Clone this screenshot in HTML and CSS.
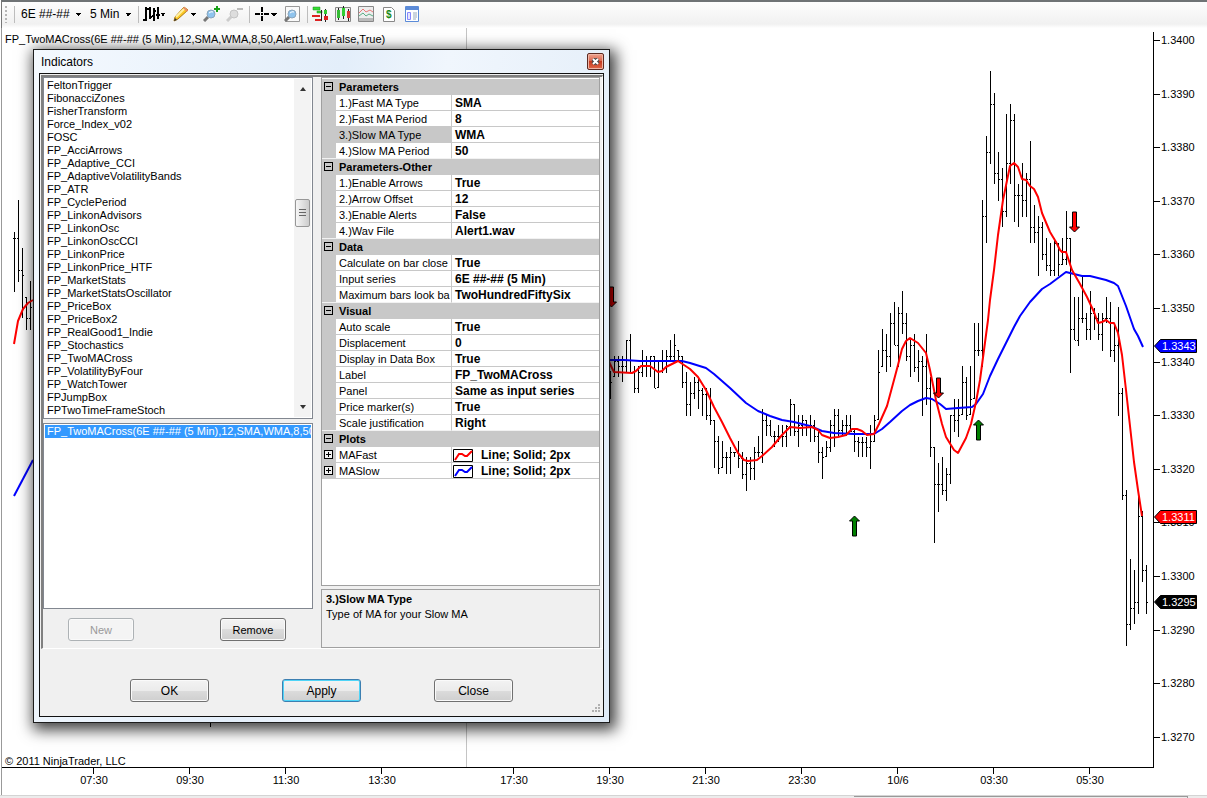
FILE: index.html
```html
<!DOCTYPE html>
<html lang="en">

<head>
    <meta charset="UTF-8" />
    <meta name="viewport" content="width=device-width, initial-scale=1" />
    <title>Chart - Indicators</title>
    <link rel="stylesheet" href="styles.css">
</head>

<body>

    <header class="toolbar">
        <span class="grip"></span>
        <span class="sep"></span>
        <select class="tool-select instrument" aria-label="Instrument">
            <option>6E ##-##</option>
        </select>
        <select class="tool-select interval" aria-label="Interval">
            <option>5 Min</option>
        </select>
        <span class="sep"></span>
        <button class="tool drop" aria-label="Chart style">
            <svg width="17" height="16" viewBox="0 0 17 16" fill="none" stroke="#000" stroke-width="2"><path d="M3 1v14M0 14h3M3 3h2M7 1v12M5 3h2M7 11h2M11 2v13M9 10h2M11 5h2M15 1v12M13 9h4" /></svg>
        </button>
        <button class="tool drop" aria-label="Drawing tools">
            <svg width="17" height="16" viewBox="0 0 17 16"><path d="M1 15l1-4L11 1l4 3L5 13z" fill="#fbc926" stroke="#b07a10" /><path d="M3 11l9-9" stroke="#fff0a0" stroke-width="2" /><path d="M10 2l1-1 4 3-1 2z" fill="#e98a6a" /><path d="M1 15l1-3 2 2z" fill="#333" /></svg>
        </button>
        <button class="tool" aria-label="Zoom in">
            <svg width="17" height="16" viewBox="0 0 17 16"><path d="M1 15l4-4" stroke="#777" stroke-width="3" /><circle cx="8" cy="8" r="4" fill="#8fc4ee" stroke="#8aa5bc" /><path d="M6 7q2-2 4-1" stroke="#fff" fill="none" /><path d="M14 0v6M11 3h6" stroke="#18a018" stroke-width="2" /></svg>
        </button>
        <button class="tool" aria-label="Zoom out">
            <svg width="17" height="16" viewBox="0 0 17 16"><path d="M1 15l4-4" stroke="#ccc" stroke-width="3" /><circle cx="8" cy="8" r="4" fill="#ddd" stroke="#c4c4c4" /><path d="M11 3h6" stroke="#bbb" stroke-width="2" /></svg>
        </button>
        <span class="sep"></span>
        <button class="tool drop" aria-label="Cross hair">
            <svg width="17" height="16" viewBox="0 0 17 16" stroke="#000" stroke-width="2"><path d="M1 8h5M10 8h5M8 1v5M8 10v5" /><path d="M7 8h2" /></svg>
        </button>
        <button class="tool" aria-label="Zoom frame">
            <svg width="17" height="16" viewBox="0 0 17 16"><path d="M1.500.5h14v15h-14z" fill="#fafafa" stroke="#999" /><path d="M1 15l5-5" stroke="#777" stroke-width="3" /><circle cx="8" cy="8" r="4" fill="#8fc4ee" stroke="#8aa5bc" /><path d="M6 7q2-2 4-1" stroke="#fff" fill="none" /></svg>
        </button>
        <span class="sep"></span>
        <button class="tool" aria-label="Chart trader">
            <svg width="17" height="16" viewBox="0 0 17 16"><path d="M1 1h7v3H1zM5 5h5v2H5z" fill="#3d3" stroke="#282" stroke-width=".5" /><path d="M0 9h8v2H0zM3 13h7v2H3z" fill="#d22" /><path d="M9.500 4v11M13.500 3v13" stroke="#222" /><path d="M12 4h3v4h-3z" fill="#3c3" /><path d="M12 10h4v4h-4z" fill="#d22" /></svg>
        </button>
        <button class="tool" aria-label="Data series">
            <svg width="17" height="16" viewBox="0 0 17 16"><path d="M.5 1.500h15v14H.5z" fill="#eee" stroke="#888" /><path d="M3.500 2v12M8.500 0v13M13.500 3v12" stroke="#222" /><path d="M2 4h3v8H2z" fill="#3b3" /><path d="M7 2h3v8H7z" fill="#3c3" /><path d="M12 5h3v7h-3z" fill="#d33" /></svg>
        </button>
        <button class="tool" aria-label="Indicators">
            <svg width="17" height="16" viewBox="0 0 17 16" fill="none"><path d="M.5.5h15v15H.5z" fill="#eee" stroke="#888" /><path d="M1 12h14v3H1z" fill="#bbb" /><path d="M1 7l4-4 3 3 4-2 3 2" stroke="#e87878" /><path d="M1 10l4-3 3 3 3-2 4 2" stroke="#5aae86" /></svg>
        </button>
        <button class="tool" aria-label="Strategies">
            <svg width="17" height="16" viewBox="0 0 17 16"><path d="M2.500 1.500h8l3 3v11h-11z" fill="#fff" stroke="#888" /><text class="dollar" x="5" y="12">$</text></svg>
        </button>
        <button class="tool" aria-label="Properties">
            <svg width="17" height="16" viewBox="0 0 17 16"><path d="M1.500.5h13v15h-13z" fill="#fff" stroke="#5b8bd8" /><path d="M2 1h12v3H2z" fill="#5b8bd8" /><path d="M3.500 6.500h3v7h-3z" fill="#e4e4ff" stroke="#88f" /><path d="M9 7h4M9 9h4M9 11h4M9 13h3" stroke="#9ab" /></svg>
        </button>
    </header>

    <main class="desktop">
        <svg class="chart" id="chart" viewBox="0 28 1207 767">
            <path class="edge" d="M1.500 28V795" />
            <path class="session" d="M466.500 28V767" />
            <g id="bars"></g>
            <path class="bar" d="M210.500 700V727" />
            <polyline class="slow" points="14,496 33,460" />
            <polyline class="slow" points="605,360 624,360 640,361 682,361 690,363 706,368 714,374 730,388 746,403 758,411 770,416 782,420 794,422 810,426 822,431 834,433 854,434 874,434 882,429 890,422 902,411 910,405 918,401 926,398 932,399 940,404 946,409 958,408 972,407 976,404 983,394 990,376 998,359 1006,343 1014,327 1020,316 1030,302 1042,289 1050,284 1066,272 1082,276 1090,276 1106,280 1114,283 1118,286 1126,306 1134,329 1138,336 1143,347" />
            <polyline class="fast" points="14,344 18,321 23,309 28,303 33,300" />
            <polyline class="fast" points="606,355 610,364 614,372 632,373 636,371 641,366 650,366 658,372 662,371 666,367 678,361 690,369 698,377 706,390 714,407 722,422 730,438 738,453 744,460 748,461 757,460 762,456 772,447 782,435 790,427 800,428 812,427 818,430 822,435 830,438 838,437 846,435 852,429 857,429 862,431 867,435 874,434 879,424 887,406 894,380 898,365 902,349 906,341 910,338 918,343 926,353 930,370 936,400 942,424 946,437 954,450 958,453 966,438 971,424 976,402 980,380 984,350 988,320 990,300 994,270 998,235 1003,200 1010,166 1014,163 1018,167 1022,179 1026,180 1030,186 1034,189 1038,197 1042,213 1050,232 1056,242 1060,250 1062,252 1066,252 1072,270 1080,284 1087,297 1094,312 1098,323 1102,322 1106,320 1110,323 1114,323 1118,333 1122,355 1126,390 1134,462 1138,490 1142,516" />
            <g id="arrows"></g>
            <path class="axis" d="M1153.500 32V767.500H2" />
            <g id="scale"></g>
            <text x="5" y="43">FP_TwoMACross(6E ##-## (5 Min),12,SMA,WMA,8,50,Alert1.wav,False,True)</text>
            <text x="5" y="765">© 2011 NinjaTrader, LLC</text>
        </svg>

        <section class="dialog" role="dialog" aria-labelledby="dialogTitle">
            <div class="titlebar">
                <h1 id="dialogTitle">Indicators</h1>
                <button class="close" aria-label="Close window">
                    <svg width="9" height="7" viewBox="0 0 9 7"><path d="M2 1l5 5M7 1L2 6" stroke="#444" stroke-width="4" /><path d="M2 1l5 5M7 1L2 6" stroke="#fff" stroke-width="2" /></svg>
                </button>
            </div>

            <div class="client">
                <div class="panes">
                    <div class="left">
                        <div class="listbox available">
                            <select size="26" aria-label="Available indicators">
                                <option>FeltonTrigger</option>
                                <option>FibonacciZones</option>
                                <option>FisherTransform</option>
                                <option>Force_Index_v02</option>
                                <option>FOSC</option>
                                <option>FP_AcciArrows</option>
                                <option>FP_Adaptive_CCI</option>
                                <option>FP_AdaptiveVolatilityBands</option>
                                <option>FP_ATR</option>
                                <option>FP_CyclePeriod</option>
                                <option>FP_LinkonAdvisors</option>
                                <option>FP_LinkonOsc</option>
                                <option>FP_LinkonOscCCI</option>
                                <option>FP_LinkonPrice</option>
                                <option>FP_LinkonPrice_HTF</option>
                                <option>FP_MarketStats</option>
                                <option>FP_MarketStatsOscillator</option>
                                <option>FP_PriceBox</option>
                                <option>FP_PriceBox2</option>
                                <option>FP_RealGood1_Indie</option>
                                <option>FP_Stochastics</option>
                                <option>FP_TwoMACross</option>
                                <option>FP_VolatilityByFour</option>
                                <option>FP_WatchTower</option>
                                <option>FPJumpBox</option>
                                <option>FPTwoTimeFrameStoch</option>
                            </select>
                            <div class="scrollbar">
                                <span class="arrow up"></span>
                                <span class="thumb"></span>
                                <span class="arrow down"></span>
                            </div>
                        </div>
                        <div class="listbox applied">
                            <select size="14" aria-label="Applied indicators">
                                <option selected>FP_TwoMACross(6E ##-## (5 Min),12,SMA,WMA,8,50,Alert1.wav,False,True)</option>
                            </select>
                        </div>
                        <div class="list-actions">
                            <button class="btn small" disabled>New</button>
                            <button class="btn small">Remove</button>
                        </div>
                    </div>

                    <div class="right">
                        <div class="grid-box">
                            <table class="props">
                                <colgroup>
                                    <col class="col-toggle">
                                    <col class="col-name">
                                    <col>
                                </colgroup>
                                <tbody>
                                    <tr class="cat"><td><button class="toggle" aria-label="Collapse Parameters"></button></td><th colspan="2">Parameters</th></tr>
                                    <tr><td></td><th>1.)Fast MA Type</th><td>SMA</td></tr>
                                    <tr><td></td><th>2.)Fast MA Period</th><td>8</td></tr>
                                    <tr class="current"><td></td><th>3.)Slow MA Type</th><td>WMA</td></tr>
                                    <tr><td></td><th>4.)Slow MA Period</th><td>50</td></tr>
                                </tbody>
                                <tbody>
                                    <tr class="cat"><td><button class="toggle" aria-label="Collapse Parameters-Other"></button></td><th colspan="2">Parameters-Other</th></tr>
                                    <tr><td></td><th>1.)Enable Arrows</th><td>True</td></tr>
                                    <tr><td></td><th>2.)Arrow Offset</th><td>12</td></tr>
                                    <tr><td></td><th>3.)Enable Alerts</th><td>False</td></tr>
                                    <tr><td></td><th>4.)Wav File</th><td>Alert1.wav</td></tr>
                                </tbody>
                                <tbody>
                                    <tr class="cat"><td><button class="toggle" aria-label="Collapse Data"></button></td><th colspan="2">Data</th></tr>
                                    <tr><td></td><th>Calculate on bar close</th><td>True</td></tr>
                                    <tr><td></td><th>Input series</th><td>6E ##-## (5 Min)</td></tr>
                                    <tr><td></td><th>Maximum bars look ba</th><td>TwoHundredFiftySix</td></tr>
                                </tbody>
                                <tbody>
                                    <tr class="cat"><td><button class="toggle" aria-label="Collapse Visual"></button></td><th colspan="2">Visual</th></tr>
                                    <tr><td></td><th>Auto scale</th><td>True</td></tr>
                                    <tr><td></td><th>Displacement</th><td>0</td></tr>
                                    <tr><td></td><th>Display in Data Box</th><td>True</td></tr>
                                    <tr><td></td><th>Label</th><td>FP_TwoMACross</td></tr>
                                    <tr><td></td><th>Panel</th><td>Same as input series</td></tr>
                                    <tr><td></td><th>Price marker(s)</th><td>True</td></tr>
                                    <tr><td></td><th>Scale justification</th><td>Right</td></tr>
                                </tbody>
                                <tbody>
                                    <tr class="cat"><td><button class="toggle" aria-label="Collapse Plots"></button></td><th colspan="2">Plots</th></tr>
                                    <tr><td><button class="toggle plus" aria-label="Expand MAFast"></button></td><th>MAFast</th>
                                        <td class="plot"><div><svg width="20" height="13" viewBox="0 0 20 13"><path d="M.5.5h19v12H.5z" fill="#fff" stroke="#000" /><path d="M2 11l4-6h3l3 2h2l5-5" fill="none" stroke="#f00" stroke-width="2" /></svg>Line; Solid; 2px</div></td></tr>
                                    <tr><td><button class="toggle plus" aria-label="Expand MASlow"></button></td><th>MASlow</th>
                                        <td class="plot"><div><svg width="20" height="13" viewBox="0 0 20 13"><path d="M.5.5h19v12H.5z" fill="#fff" stroke="#000" /><path d="M2 11l4-6h3l3 2h2l5-5" fill="none" stroke="#00f" stroke-width="2" /></svg>Line; Solid; 2px</div></td></tr>
                                </tbody>
                            </table>
                        </div>
                        <div class="help">
                            <h2>3.)Slow MA Type</h2>
                            <p>Type of MA for your Slow MA</p>
                        </div>
                    </div>
                </div>

                <div class="actions">
                    <button class="btn">OK</button>
                    <button class="btn default">Apply</button>
                    <button class="btn">Close</button>
                </div>
                <svg class="resize" width="9" height="9" viewBox="0 0 9 9" fill="#b0b0b0"><path d="M7 0h2v2H7zM7 3h2v2H7zM7 6h2v2H7zM4 3h2v2H4zM4 6h2v2H4zM1 6h2v2H1z" /></svg>
            </div>
        </section>
    </main>

    <footer class="status"><span></span></footer>

    <script src="chart.js"></script>
</body>

</html>
```

FILE: styles.css
```css
* {
    box-sizing: border-box;
}

body {
    margin: 0;
    min-height: 100vh;
    display: flex;
    flex-direction: column;
    background: #fff;
    color: #000;
    font-family: "Liberation Sans", Arial, sans-serif;
    font-size: 11px;
    overflow: hidden;
}

button,
select {
    font: inherit;
    color: inherit;
}

/* toolbar */

.toolbar {
    height: 28px;
    flex: none;
    display: flex;
    align-items: center;
    margin-left: 1px;
    padding: 0 0 2px 3px;
    border-top: 2px solid #6f7375;
    border-left: 1px solid #777;
    background: linear-gradient(#fdfdfd, #f1f1f1 85%, #fff);
    font-size: 12px;
}

.grip {
    width: 2px;
    height: 17px;
    margin-right: 7px;
    background: repeating-linear-gradient(#b5b5b5 0 2px, transparent 2px 4px);
}

.sep {
    width: 1px;
    height: 17px;
    margin-right: 4px;
    background: #bdbdbd;
}

.tool-select {
    appearance: none;
    height: 20px;
    margin-right: 6px;
    padding: 0 0 0 2px;
    border: 0;
}

.tool-select,
.tool.drop {
    background: conic-gradient(from -45deg at 50% 100%, #000 90deg, transparent 0) no-repeat right 1px center / 6px 3px;
}

.instrument {
    width: 63px;
}

.interval {
    width: 44px;
}

.tool {
    display: flex;
    width: 17px;
    margin-right: 6px;
    padding: 0;
    border: 0;
    background: none;
}

.tool.drop {
    width: 24px;
}

.dollar {
    font-size: 10px;
    font-weight: bold;
    fill: #188a18;
}

/* chart */

.desktop {
    position: relative;
}

.chart {
    display: block;
    width: 100%;
    height: auto;
    font-size: 11px;
}

.edge,
.session,
.bar,
.axis {
    fill: none;
    shape-rendering: crispEdges;
}

.edge {
    stroke: #999;
}

.session {
    stroke: #c4c4c4;
}

.bar,
.axis {
    stroke: #000;
}

.slow,
.fast {
    fill: none;
    stroke-width: 2;
    stroke-linejoin: round;
}

.slow {
    stroke: #00f;
}

.fast {
    stroke: #f00;
}

.time {
    text-anchor: middle;
}

.marker {
    stroke: #000;
}

.marker-text {
    fill: #fff;
}

.status {
    flex: 1;
    display: flex;
    justify-content: flex-end;
    padding-right: 19px;
    border-top: 1px solid #d4d4d4;
    background: #ececec;
}

.status span {
    width: 334px;
    border-top: 1px solid #999;
    border-right: 1px solid #999;
}

/* dialog */

.dialog {
    position: absolute;
    left: 33px;
    top: 21px;
    width: 577px;
    display: flex;
    flex-direction: column;
    padding: 0 5px 5px;
    border: 1px solid #1c1c1c;
    background: linear-gradient(100deg, #f4f9fe, #e3eefa 45%, #f0f6fd 60%, #dfebf7);
    box-shadow: 3px 4px 14px 3px rgba(0, 0, 0, .75);
}

.titlebar {
    height: 23px;
    display: flex;
    align-items: center;
    justify-content: space-between;
    padding-left: 2px;
}

.titlebar h1 {
    margin: 0;
    font-size: 12px;
    font-weight: normal;
}

.close {
    width: 17px;
    height: 17px;
    display: flex;
    align-items: center;
    justify-content: center;
    padding: 0;
    border: 1px solid #5c2a22;
    border-radius: 2px;
    background: linear-gradient(#eea48f, #d9614a 50%, #c5391f 50%, #e0694a);
    box-shadow: inset 0 0 0 1px #f0b5a5;
}

.client {
    position: relative;
    border: 1px solid #111;
    background: #f0f0f0;
}

.panes {
    display: flex;
    gap: 8px;
    margin: 1px 0 0 1px;
    padding-right: 2px;
    border: 2px solid #808080;
    border-right-width: 1px;
    border-bottom-width: 1px;
    border-color: #808080 #fff #fff #808080;
}

.left {
    width: 270px;
    display: flex;
    flex-direction: column;
    gap: 4px;
}

.listbox {
    display: flex;
    padding: 1px;
    border: 1px solid #828790;
    background: #fff;
}

.listbox select {
    flex: 1;
    min-width: 0;
    padding: 0;
    border: 0;
    outline: 0;
    border-radius: 0;
    background: #fff;
    overflow: hidden;
    scrollbar-width: none;
}

.listbox option {
    height: 13px;
    min-height: 13px;
    padding: 0 2px;
    line-height: 13px;
    overflow: hidden;
}

.listbox option:checked {
    background: #3399ff linear-gradient(#3399ff, #3399ff);
    color: #fff;
    -webkit-text-fill-color: #fff;
}

.available {
    height: 342px;
}

.available select {
    height: 338px;
}

.applied {
    height: 186px;
}

.scrollbar {
    width: 17px;
    display: flex;
    flex-direction: column;
    align-items: center;
    justify-content: space-between;
    padding: 8px 0;
    background: #f3f3f3;
}

.arrow {
    border: 3px solid transparent;
}

.up {
    border-top: 0;
    border-bottom: 4px solid #333;
}

.down {
    border-bottom: 0;
    border-top: 4px solid #333;
}

.thumb {
    width: 15px;
    height: 28px;
    margin-bottom: 70px;
    border: 1px solid #979797;
    border-radius: 2px;
    background:
        repeating-linear-gradient(#666 0 1px, transparent 1px 3px) no-repeat center / 7px 9px,
        linear-gradient(90deg, #f6f6f6, #ccc);
}

.list-actions {
    display: flex;
    justify-content: space-between;
    padding: 5px 27px 7px 25px;
}

.btn {
    width: 79px;
    height: 23px;
    padding: 0;
    border: 1px solid #707070;
    border-radius: 3px;
    background: linear-gradient(#f3f3f3, #ebebeb 50%, #dcdcdc 50%, #cfcfcf);
    box-shadow: inset 0 0 0 1px #fafafa;
    font-size: 12px;
}

.btn.small {
    width: 66px;
    font-size: 11px;
}

.btn:disabled {
    border-color: #adb2b5;
    background: #f4f4f4;
    color: #9a9a9a;
}

.btn.default {
    border-color: #3c7fb1;
    box-shadow: inset 0 0 0 1px #4fd4f7;
}

.right {
    flex: 1;
    min-width: 0;
    display: flex;
    flex-direction: column;
    gap: 3px;
}

.grid-box {
    height: 509px;
    padding-top: 1px;
    border: 1px solid #a0a0a0;
    background: #fff;
}

.props {
    width: 100%;
    table-layout: fixed;
    border-collapse: separate;
    border-spacing: 0;
}

.col-toggle {
    width: 14px;
}

.col-name {
    width: 116px;
}

.props td,
.props th {
    height: 16px;
    padding: 2px 0 0 3px;
    border-bottom: 1px solid #c8c8c8;
    line-height: 13px;
    text-align: left;
    white-space: nowrap;
    overflow: hidden;
}

.props th {
    font-weight: normal;
    border-right: 1px solid #c8c8c8;
}

.props td {
    font-size: 12px;
    font-weight: bold;
}

.props td:first-child {
    padding: 0 0 0 2px;
    background: #c8c8c8;
}

.props .cat th {
    font-weight: bold;
    border-right: 0;
    background: #c8c8c8;
}

.props .current th {
    background: #c8c8c8;
}

.props tbody:not(:last-child) tr:last-child > * {
    border-bottom-color: #f2f2f2;
}

.toggle {
    display: block;
    width: 9px;
    height: 9px;
    padding: 0;
    border: 1px solid #000;
    background: linear-gradient(#000, #000) no-repeat center / 5px 1px;
}

.toggle.plus {
    background:
        linear-gradient(#000, #000) no-repeat center / 5px 1px,
        linear-gradient(#000, #000) no-repeat center / 1px 5px,
        #f0f0f0;
}

.props .plot {
    padding: 1px 0 0 1px;
}

.plot div {
    display: flex;
    align-items: center;
    gap: 8px;
    height: 14px;
}

.help {
    flex: 1;
    padding: 2px 4px;
    border: 1px solid #a0a0a0;
}

.help h2,
.help p {
    margin: 0;
    font-size: 11px;
    line-height: 15px;
}

.actions {
    display: flex;
    justify-content: space-between;
    padding: 30px 90px 14px;
}

.resize {
    position: absolute;
    right: 3px;
    bottom: 3px;
}
```

FILE: chart.js
```js
const NS = "http://www.w3.org/2000/svg";

// each run: first x, then [high, low, close] for every bar
const runs = [
    { x: 14, bars: [[232, 292, 238], [200, 282, 270], [248, 318, 275], [297, 330, 318], [281, 330, 307]] },
    { x: 610, bars: [
        [371, 399, 382], [356, 377, 361], [356, 377, 366], [356, 382, 366], [340, 372, 340], [334, 373, 372],
        [366, 393, 388], [366, 393, 372], [350, 377, 361], [356, 377, 366], [356, 377, 356], [356, 388, 388],
        [362, 388, 371], [350, 373, 361], [350, 373, 356], [340, 362, 356], [334, 362, 345], [350, 360, 356],
        [356, 388, 382], [372, 416, 404], [382, 416, 393], [377, 399, 382], [377, 409, 390], [388, 416, 394],
        [388, 420, 415], [388, 425, 420], [420, 468, 441], [436, 474, 468], [441, 468, 457], [452, 474, 457],
        [447, 474, 452], [452, 457, 452], [441, 468, 458], [452, 479, 474], [457, 491, 463], [457, 480, 468],
        [447, 480, 452], [436, 457, 452], [409, 463, 420], [415, 436, 425], [420, 436, 436], [431, 447, 436],
        [425, 442, 436], [425, 447, 436], [425, 447, 426], [399, 436, 404], [404, 436, 431], [415, 447, 425],
        [415, 436, 420], [420, 436, 425], [415, 442, 425], [420, 442, 436], [431, 463, 452], [447, 479, 457],
        [441, 457, 447], [420, 452, 425], [409, 447, 415], [409, 436, 430], [420, 436, 425], [415, 436, 425],
        [415, 432, 431], [428, 452, 441], [437, 457, 442], [437, 457, 442], [437, 457, 447], [425, 469, 441],
        [415, 442, 420], [350, 420, 372], [329, 367, 350], [334, 372, 356], [313, 367, 323], [302, 345, 345],
        [307, 367, 313], [291, 334, 323], [313, 361, 356], [340, 377, 345], [334, 372, 367], [350, 382, 361],
        [356, 416, 366], [334, 405, 388], [377, 457, 447], [447, 543, 484], [463, 512, 484], [457, 495, 490],
        [468, 501, 474], [415, 484, 415], [399, 432, 420], [399, 437, 415], [366, 415, 382], [377, 420, 415],
        [366, 415, 399], [323, 399, 350], [323, 356, 350], [200, 367, 216], [136, 243, 152], [71, 164, 104],
        [93, 184, 173], [152, 201, 179], [168, 227, 211], [114, 217, 163], [104, 184, 120], [114, 222, 195],
        [184, 227, 195], [163, 217, 200], [173, 217, 179], [141, 243, 227], [205, 243, 232], [216, 276, 227],
        [222, 260, 254], [238, 271, 265], [243, 276, 270], [238, 276, 243], [243, 276, 264], [238, 265, 259],
        [211, 265, 238], [238, 373, 329], [297, 340, 340], [297, 346, 318], [275, 323, 318], [313, 340, 329],
        [291, 340, 313], [308, 330, 318], [313, 340, 334], [313, 351, 318], [297, 323, 318], [302, 357, 350],
        [323, 362, 345], [307, 416, 393], [388, 500, 495], [490, 646, 624], [559, 630, 608], [570, 624, 602],
        [495, 614, 516], [511, 582, 570], [565, 614, 602]
    ] }
];

const arrows = [[854, 516, "up"], [978, 420, "up"], [938, 398, "down"], [1074, 232, "down"], [611, 307, "down"]];

const times = [[93, "07:30"], [189, "09:30"], [285, "11:30"], [381, "13:30"], [513, "17:30"], [609, "19:30"],
    [705, "21:30"], [801, "23:30"], [897, "10/6"], [993, "03:30"], [1089, "05:30"]];

const markers = [[346, "1.3343", "#00f"], [517, "1.3311", "#f00"], [602, "1.3295", "#000"]];

function add(parent, tag, attrs, text) {
    const el = document.createElementNS(NS, tag);
    for (const key in attrs) el.setAttribute(key, attrs[key]);
    if (text) el.textContent = text;
    document.getElementById(parent).appendChild(el);
}

function drawBars() {
    runs.forEach(run => {
        let open = run.bars[0][2];
        let d = "";
        run.bars.forEach(([high, low, close], i) => {
            const x = run.x + i * 4;
            const o = Math.min(Math.max(open, high), low - 1);
            d += `M${x + 0.5} ${high}V${low}M${x - 1} ${o + 0.5}h1M${x + 1} ${close + 0.5}h1`;
            open = close;
        });
        add("bars", "path", { class: "bar", d });
    });
}

function drawArrows() {
    arrows.forEach(([x, y, dir]) => {
        const s = dir === "up" ? 1 : -1;
        add("arrows", "path", {
            d: `M${x + 0.5} ${y}l5 ${5 * s}h-3v${15 * s}h-4v${-15 * s}h-3z`,
            fill: dir === "up" ? "#008000" : "#f00",
            stroke: "#000"
        });
    });
}

function drawScale() {
    for (let i = 0; i < 14; i++) {
        const y = Math.round(40 + i * 53.6);
        add("scale", "path", { class: "axis", d: `M1154 ${y + 0.5}h6` });
        add("scale", "text", { x: 1161, y: y + 4 }, (1.34 - i * 0.001).toFixed(4));
    }
    times.forEach(([x, label]) => {
        add("scale", "path", { class: "axis", d: `M${x + 0.5} 768v6` });
        add("scale", "text", { class: "time", x: x + 1, y: 784 }, label);
    });
    markers.forEach(([y, label, fill]) => {
        add("scale", "path", { class: "marker", d: `M1154.5 ${y}l6 -6.500h36v13h-36z`, fill });
        add("scale", "text", { class: "marker-text", x: 1162, y: y + 4 }, label);
    });
}

drawBars();
drawArrows();
drawScale();
```
